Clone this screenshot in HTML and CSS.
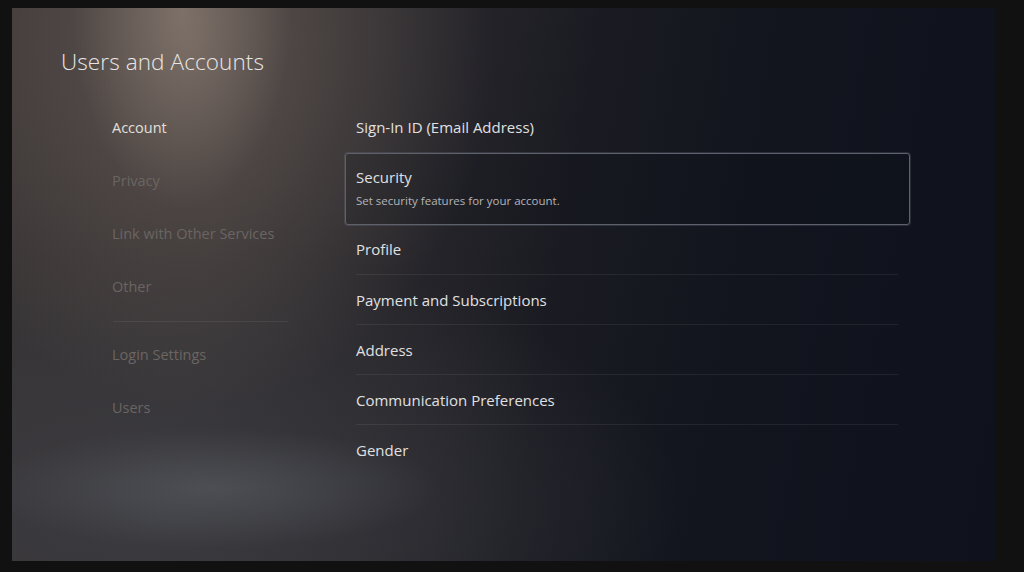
FILE: index.html
```html
<!DOCTYPE html>
<html lang="en">
<head>
    <meta charset="UTF-8">
    <meta name="viewport" content="width=device-width, initial-scale=1.0">
    <title>Users and Accounts</title>
    <link rel="stylesheet" href="styles.css">
</head>
<body>

    <!-- Console screen -->
    <div class="screen">
        <h1 class="page-title">Users and Accounts</h1>

        <div class="settings">
            <!-- Left category menu -->
            <ul class="category-menu">
                <li class="category active">Account</li>
                <li class="category">Privacy</li>
                <li class="category">Link with Other Services</li>
                <li class="category">Other</li>
                <li class="menu-divider"></li>
                <li class="category">Login Settings</li>
                <li class="category">Users</li>
            </ul>

            <!-- Options for the selected category -->
            <ul class="option-list">
                <li class="option">Sign-In ID (Email Address)</li>
                <li class="option focused">
                    <span class="option-title">Security</span>
                    <span class="option-hint">Set security features for your account.</span>
                </li>
                <li class="option">Profile</li>
                <li class="option ruled">Payment and Subscriptions</li>
                <li class="option ruled">Address</li>
                <li class="option ruled">Communication Preferences</li>
                <li class="option ruled">Gender</li>
            </ul>
        </div>
    </div>

</body>
</html>
```

FILE: styles.css
```css
/* Basic resets and body styling */
body {
    font-family: "Open Sans", "Noto Sans", sans-serif;
    margin: 0;
    padding: 0;
    background-color: #111111;
}

ul {
    list-style: none;
    margin: 0;
    padding: 0;
}

/* The TV picture */
.screen {
    width: 983px;
    height: 553px;
    margin: 8px 0 0 12px;
    padding: 39px 0 0 49px;
    box-sizing: border-box;
    overflow: hidden;
    color: #e0e0e2;
    background-color: #17181e;
    background-image:
        radial-gradient(ellipse 110px 200px at 170px 0px, rgba(160, 145, 132, 0.5), rgba(160, 145, 132, 0) 100%),
        radial-gradient(ellipse 300px 360px at 180px 40px, rgba(110, 97, 90, 0.7), rgba(90, 80, 76, 0) 100%),
        radial-gradient(ellipse 230px 60px at 200px 480px, rgba(100, 104, 110, 0.45), rgba(100, 104, 110, 0) 100%),
        radial-gradient(ellipse 520px 260px at 150px 500px, rgba(60, 60, 65, 0.9), rgba(55, 55, 60, 0) 100%),
        linear-gradient(100deg, #373334 0%, #343133 22%, #27262b 40%, #1a1b22 55%, #12151e 72%, #0f121c 100%);
}

.page-title {
    margin: 0;
    font-size: 22.5px;
    font-weight: 300;
    line-height: 30px;
    color: #e8e6e4;
    letter-spacing: 0.1px;
}

/* Two columns below the title */
.settings {
    display: flex;
    align-items: flex-start;
    margin-top: 24px;
}

/* Left menu */
.category-menu {
    width: 176px;
    margin-left: 51px;
    margin-right: 57px;
}

.category {
    height: 53px;
    line-height: 53px;
    font-size: 14.5px;
    color: #6a6562;
    white-space: nowrap;
}

.category.active {
    color: #e2e0de;
}

.menu-divider {
    height: 1px;
    margin: 8px 0 6px 1px;
    background-color: rgba(255, 255, 255, 0.07);
}

/* Right option list */
.option-list {
    width: 565px;
    margin-top: 1px;
}

.option {
    height: 50px;
    line-height: 50px;
    padding: 0 11px;
    font-size: 15px;
    color: #e0e0e2;
}

.option.ruled {
    margin: 0 12px 0 11px;
    padding: 0;
    border-top: 1px solid rgba(255, 255, 255, 0.07);
    height: 49px;
}

.option.focused {
    display: flex;
    flex-direction: column;
    height: 72px;
    margin-top: 1px;
    margin-bottom: -1px;
    line-height: normal;
    padding: 12px 10px 15px;
    border: 1px solid #5d616c;
    border-radius: 3px;
    box-shadow: 0 0 0 1px rgba(120, 125, 140, 0.25);
    background-color: rgba(10, 12, 20, 0.15);
    box-sizing: border-box;
}

.option-title {
    line-height: 22px;
}

.option-hint {
    margin-top: 5px;
    font-size: 11.5px;
    line-height: 16px;
    color: #b4b4b8;
}
```
